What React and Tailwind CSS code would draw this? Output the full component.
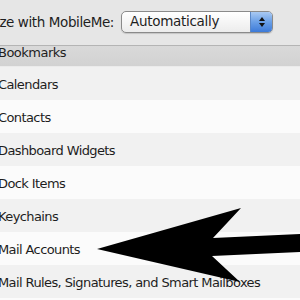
const rows = [
  'Calendars',
  'Contacts',
  'Dashboard Widgets',
  'Dock Items',
  'Keychains',
  'Mail Accounts',
  'Mail Rules, Signatures, and Smart Mailboxes',
  'Notes',
]

const App = () => {
  return (
    <div className="relative w-[300px] h-[300px] overflow-hidden bg-[#fbfbfb] text-[#1e1e1e] font-['DejaVu_Sans',sans-serif]">
      <div className="h-[45px] bg-[#e6e6e6] flex items-center">
        <div className="w-[114px] flex justify-end overflow-hidden whitespace-nowrap text-[13.5px] tracking-[-0.4px] leading-none">
          <span>Synchronize with MobileMe:</span>
        </div>
        <div className="ml-[7px] mt-[-2px] w-[152px] h-[22px] flex rounded-[5px] border border-[#8a8a8a] bg-gradient-to-b from-white to-[#ececec] shadow-[0_1px_1px_rgba(0,0,0,0.15)] overflow-hidden">
          <div className="flex-1 flex items-center pl-[8px] text-[13.5px] tracking-[-0.3px] leading-none">Automatically</div>
          <div className="w-[22px] flex flex-col items-center justify-center gap-[2px] border-l border-[#5b87c6] bg-gradient-to-b from-[#a9c9f2] via-[#6a9fe6] to-[#3d7ad8]">
            <div className="w-0 h-0 border-l-[3px] border-r-[3px] border-b-[4px] border-l-transparent border-r-transparent border-b-[#111]" />
            <div className="w-0 h-0 border-l-[3px] border-r-[3px] border-t-[4px] border-l-transparent border-r-transparent border-t-[#111]" />
          </div>
        </div>
      </div>
      <div className="h-[22px] border-t border-[#b4b4b4] border-b border-b-[#ebebeb] bg-gradient-to-b from-[#d9d9d9] to-[#d2d2d2] flex items-start">
        <span className="ml-[-2px] text-[13px] tracking-[-0.5px] leading-none">Bookmarks</span>
      </div>
      {rows.map((r, i) => (
        <div key={r} className={`h-[33px] flex items-center ${i % 2 === 0 ? 'bg-[#f1f1f1]' : 'bg-[#fbfbfb]'}`}>
          <span className="ml-[-2px] mt-[2px] text-[13px] tracking-[-0.6px] leading-none whitespace-nowrap">{r}</span>
        </div>
      ))}
      <svg className="absolute left-0 top-0" width="300" height="300" viewBox="0 0 300 300">
        <polygon points="97,249 241,208 213,238 300,234 300,252 212,256 240,282" fill="#000" />
      </svg>
    </div>
  )
}

export default App
